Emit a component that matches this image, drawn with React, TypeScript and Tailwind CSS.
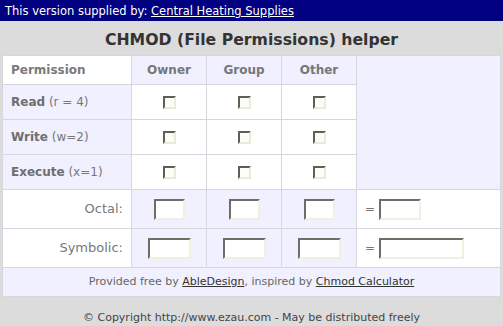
import React from 'react';

const font = { fontFamily: '"DejaVu Sans", Verdana, sans-serif' };

const Check: React.FC = () => (
  <span className="inline-block w-[13px] h-[13px] align-middle bg-[#fcfcf8] border-2 border-t-[#5f5f56] border-l-[#5f5f56] border-b-[#ecead9] border-r-[#ecead9]" />
);

const Box: React.FC<{ w: string }> = ({ w }) => (
  <span
    className={`inline-block h-[21px] align-middle bg-white border-2 border-t-[#6e6e66] border-l-[#6e6e66] border-b-[#f1efe2] border-r-[#f1efe2] ${w}`}
  />
);

const perms = [
  { name: 'Read', hint: '(r = 4)' },
  { name: 'Write', hint: '(w=2)' },
  { name: 'Execute', hint: '(x=1)' },
];

const cell = 'border border-[#d6d6de]';

export default function App() {
  return (
    <div className="w-[503px] h-[326px] bg-[#dcdcdc] overflow-hidden" style={font}>
      {/* Supplier bar */}
      <div className="h-[21px] bg-[#000080] text-white text-[11.5px] leading-[22px] pl-[5px]">
        This version supplied by: <span className="underline">Central Heating Supplies</span>
      </div>

      {/* Title */}
      <div className="h-[34px] flex items-center justify-center pt-[3px] text-[15.7px] font-bold text-[#333]">
        CHMOD (File Permissions) helper
      </div>

      <table className="ml-[2px] w-[498px] table-fixed border-collapse text-[12px] text-[#777]">
        <colgroup>
          <col className="w-[129px]" />
          <col className="w-[75px]" />
          <col className="w-[75px]" />
          <col className="w-[75px]" />
          <col className="w-[144px]" />
        </colgroup>
        <tbody>
          <tr className="h-[29px] font-bold">
            <td className={`${cell} bg-white pl-[8px] text-[#7a7a7a]`}>Permission</td>
            <td className={`${cell} bg-[#f0f0fe] text-center`}>Owner</td>
            <td className={`${cell} bg-[#f0f0fe] text-center`}>Group</td>
            <td className={`${cell} bg-[#f0f0fe] text-center`}>Other</td>
            <td className={`${cell} bg-[#f0f0fe]`} rowSpan={4} />
          </tr>
          {perms.map((p) => (
            <tr key={p.name} className="h-[35px]">
              <td className={`${cell} bg-[#f0f0fe] pl-[8px]`}>
                <span className="font-bold text-[#6e6e6e]">{p.name}</span> {p.hint}
              </td>
              <td className={`${cell} bg-white text-center`}><Check /></td>
              <td className={`${cell} bg-white text-center`}><Check /></td>
              <td className={`${cell} bg-white text-center`}><Check /></td>
            </tr>
          ))}
          <tr className="h-[39px]">
            <td className={`${cell} bg-white text-right pr-[8px] text-[13px]`}>Octal:</td>
            <td className={`${cell} bg-[#f0f0fe] text-center`}><Box w="w-[31px]" /></td>
            <td className={`${cell} bg-[#f0f0fe] text-center`}><Box w="w-[31px]" /></td>
            <td className={`${cell} bg-[#f0f0fe] text-center`}><Box w="w-[31px]" /></td>
            <td className={`${cell} bg-white pl-[8px]`}>
              <span className="align-middle mr-[4px]">=</span>
              <Box w="w-[42px]" />
            </td>
          </tr>
          <tr className="h-[39px]">
            <td className={`${cell} bg-white text-right pr-[8px] text-[13px]`}>Symbolic:</td>
            <td className={`${cell} bg-[#f0f0fe] text-center`}><Box w="w-[43px]" /></td>
            <td className={`${cell} bg-[#f0f0fe] text-center`}><Box w="w-[43px]" /></td>
            <td className={`${cell} bg-[#f0f0fe] text-center`}><Box w="w-[43px]" /></td>
            <td className={`${cell} bg-white pl-[8px]`}>
              <span className="align-middle mr-[4px]">=</span>
              <Box w="w-[85px]" />
            </td>
          </tr>
          <tr className="h-[29px]">
            <td colSpan={5} className={`${cell} bg-[#f0f0fe] text-center text-[11px] text-[#666]`}>
              Provided free by <span className="underline text-[#333]">AbleDesign</span>, inspired by{' '}
              <span className="underline text-[#333]">Chmod Calculator</span>
            </td>
          </tr>
        </tbody>
      </table>

      {/* Copyright */}
      <div className="pt-[14px] text-center text-[11px] leading-[13px] text-[#444]">
        © Copyright http://www.ezau.com - May be distributed freely
      </div>
    </div>
  );
}
